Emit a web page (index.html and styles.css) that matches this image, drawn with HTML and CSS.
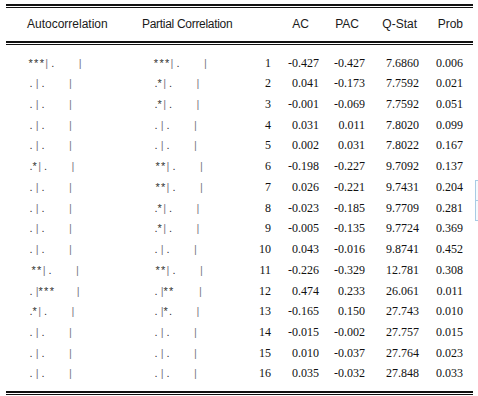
FILE: index.html
```html
<!DOCTYPE html>
<html>
<head>
<meta charset="utf-8">
<link rel="stylesheet" href="styles.css">
</head>
<body>
<div class="table">
  <div class="rule"></div>
  <div class="row head">
    <div class="h-ac">Autocorrelation</div>
    <div class="h-pac">Partial Correlation</div>
    <div></div>
    <div class="hn h1">AC</div>
    <div class="hn h2">PAC</div>
    <div class="hn h3">Q-Stat</div>
    <div class="hn h4">Prob</div>
  </div>
  <div class="rule"></div>
  <div class="body">
    <div class="row"><div class="g ga s3"><span class="st">***</span><span class="b">|</span> .        <span class="b">|</span></div><div class="g gp s3"><span class="st">***</span><span class="b">|</span> .        <span class="b">|</span></div><div class="n">1</div><div class="n">-0.427</div><div class="n">-0.427</div><div class="n">7.6860</div><div class="n">0.006</div></div>
    <div class="row"><div class="g ga">. <span class="b">|</span> .        <span class="b">|</span></div><div class="g gp">.<span class="st">*</span><span class="b">|</span> .        <span class="b">|</span></div><div class="n">2</div><div class="n">0.041</div><div class="n">-0.173</div><div class="n">7.7592</div><div class="n">0.021</div></div>
    <div class="row"><div class="g ga">. <span class="b">|</span> .        <span class="b">|</span></div><div class="g gp">.<span class="st">*</span><span class="b">|</span> .        <span class="b">|</span></div><div class="n">3</div><div class="n">-0.001</div><div class="n">-0.069</div><div class="n">7.7592</div><div class="n">0.051</div></div>
    <div class="row"><div class="g ga">. <span class="b">|</span> .        <span class="b">|</span></div><div class="g gp">. <span class="b">|</span> .        <span class="b">|</span></div><div class="n">4</div><div class="n">0.031</div><div class="n">0.011</div><div class="n">7.8020</div><div class="n">0.099</div></div>
    <div class="row"><div class="g ga">. <span class="b">|</span> .        <span class="b">|</span></div><div class="g gp">. <span class="b">|</span> .        <span class="b">|</span></div><div class="n">5</div><div class="n">0.002</div><div class="n">0.031</div><div class="n">7.8022</div><div class="n">0.167</div></div>
    <div class="row"><div class="g ga">.<span class="st">*</span><span class="b">|</span> .        <span class="b">|</span></div><div class="g gp s2"><span class="st">**</span><span class="b">|</span> .        <span class="b">|</span></div><div class="n">6</div><div class="n">-0.198</div><div class="n">-0.227</div><div class="n">9.7092</div><div class="n">0.137</div></div>
    <div class="row"><div class="g ga">. <span class="b">|</span> .        <span class="b">|</span></div><div class="g gp s2"><span class="st">**</span><span class="b">|</span> .        <span class="b">|</span></div><div class="n">7</div><div class="n">0.026</div><div class="n">-0.221</div><div class="n">9.7431</div><div class="n">0.204</div></div>
    <div class="row"><div class="g ga">. <span class="b">|</span> .        <span class="b">|</span></div><div class="g gp">.<span class="st">*</span><span class="b">|</span> .        <span class="b">|</span></div><div class="n">8</div><div class="n">-0.023</div><div class="n">-0.185</div><div class="n">9.7709</div><div class="n">0.281</div></div>
    <div class="row"><div class="g ga">. <span class="b">|</span> .        <span class="b">|</span></div><div class="g gp">.<span class="st">*</span><span class="b">|</span> .        <span class="b">|</span></div><div class="n">9</div><div class="n">-0.005</div><div class="n">-0.135</div><div class="n">9.7724</div><div class="n">0.369</div></div>
    <div class="row"><div class="g ga">. <span class="b">|</span> .        <span class="b">|</span></div><div class="g gp">. <span class="b">|</span> .        <span class="b">|</span></div><div class="n">10</div><div class="n">0.043</div><div class="n">-0.016</div><div class="n">9.8741</div><div class="n">0.452</div></div>
    <div class="row"><div class="g ga s2"><span class="st">**</span><span class="b">|</span> .        <span class="b">|</span></div><div class="g gp s2"><span class="st">**</span><span class="b">|</span> .        <span class="b">|</span></div><div class="n">11</div><div class="n">-0.226</div><div class="n">-0.329</div><div class="n">12.781</div><div class="n">0.308</div></div>
    <div class="row"><div class="g ga">. <span class="b">|</span><span class="st">***</span>       <span class="b">|</span></div><div class="g gp">. <span class="b">|</span><span class="st">**</span>        <span class="b">|</span></div><div class="n">12</div><div class="n">0.474</div><div class="n">0.233</div><div class="n">26.061</div><div class="n">0.011</div></div>
    <div class="row"><div class="g ga">.<span class="st">*</span><span class="b">|</span> .        <span class="b">|</span></div><div class="g gp">. <span class="b">|</span><span class="st">*</span>.        <span class="b">|</span></div><div class="n">13</div><div class="n">-0.165</div><div class="n">0.150</div><div class="n">27.743</div><div class="n">0.010</div></div>
    <div class="row"><div class="g ga">. <span class="b">|</span> .        <span class="b">|</span></div><div class="g gp">. <span class="b">|</span> .        <span class="b">|</span></div><div class="n">14</div><div class="n">-0.015</div><div class="n">-0.002</div><div class="n">27.757</div><div class="n">0.015</div></div>
    <div class="row"><div class="g ga">. <span class="b">|</span> .        <span class="b">|</span></div><div class="g gp">. <span class="b">|</span> .        <span class="b">|</span></div><div class="n">15</div><div class="n">0.010</div><div class="n">-0.037</div><div class="n">27.764</div><div class="n">0.023</div></div>
    <div class="row"><div class="g ga">. <span class="b">|</span> .        <span class="b">|</span></div><div class="g gp">. <span class="b">|</span> .        <span class="b">|</span></div><div class="n">16</div><div class="n">0.035</div><div class="n">-0.032</div><div class="n">27.848</div><div class="n">0.033</div></div>
  </div>
  <div class="rule"></div>
</div>
<div class="edge"><div class="edge-in"></div></div>
</body>
</html>
```

FILE: styles.css
```css
html, body {
  margin: 0;
  padding: 0;
  background: #ffffff;
}
body {
  position: relative;
  width: 478px;
  height: 396px;
  overflow: hidden;
}
.table {
  margin-left: 6px;
  width: 467px;
  padding-top: 4px;
}
.rule {
  height: 1px;
  border-top: 2px solid #111;
  border-bottom: 1px solid #111;
}
.row {
  display: grid;
  grid-template-columns: 130px 104px 31px 48px 46px 54px 44px;
  height: 20.733px;
  line-height: 20.733px;
}
.head {
  height: 33px;
  line-height: 33px;
  font-family: "Liberation Sans", Arial, sans-serif;
  font-size: 12px;
  color: #1a1a1a;
}
.h-ac { padding-left: 21px; white-space: nowrap; }
.h-pac { padding-left: 6px; white-space: nowrap; letter-spacing: -0.3px; }
.hn { text-align: right; }
.h1 { padding-right: 10px; }
.h2 { padding-right: 6px; }
.h3 { padding-right: 2px; }
.h4 { padding-right: 0; }
.body {
  padding-top: 7.6px;
  padding-bottom: 6.6px;
}
.g {
  font-family: "Liberation Sans", Arial, sans-serif;
  font-size: 11px;
  white-space: pre;
  color: #333;
}
.ga { padding-left: 23.5px; }
.ga.s3 { padding-left: 22.5px; }
.ga.s2 { padding-left: 25.5px; }
.gp { padding-left: 18.5px; }
.gp.s3 { padding-left: 17.8px; }
.gp.s2 { padding-left: 19.4px; }
.st { letter-spacing: 1.3px; }
.b { color: #7a7a86; }
.n {
  font-family: "Liberation Serif", "Times New Roman", serif;
  font-size: 12px;
  text-align: right;
  color: #111;
}
.edge {
  position: absolute;
  left: 475px;
  top: 180px;
  width: 8px;
  height: 39px;
  border: 1px solid #a9cbe4;
  background: #f6fafd;
}
.edge-in {
  margin-top: 19px;
  border-top: 1px solid #a9cbe4;
}
```
